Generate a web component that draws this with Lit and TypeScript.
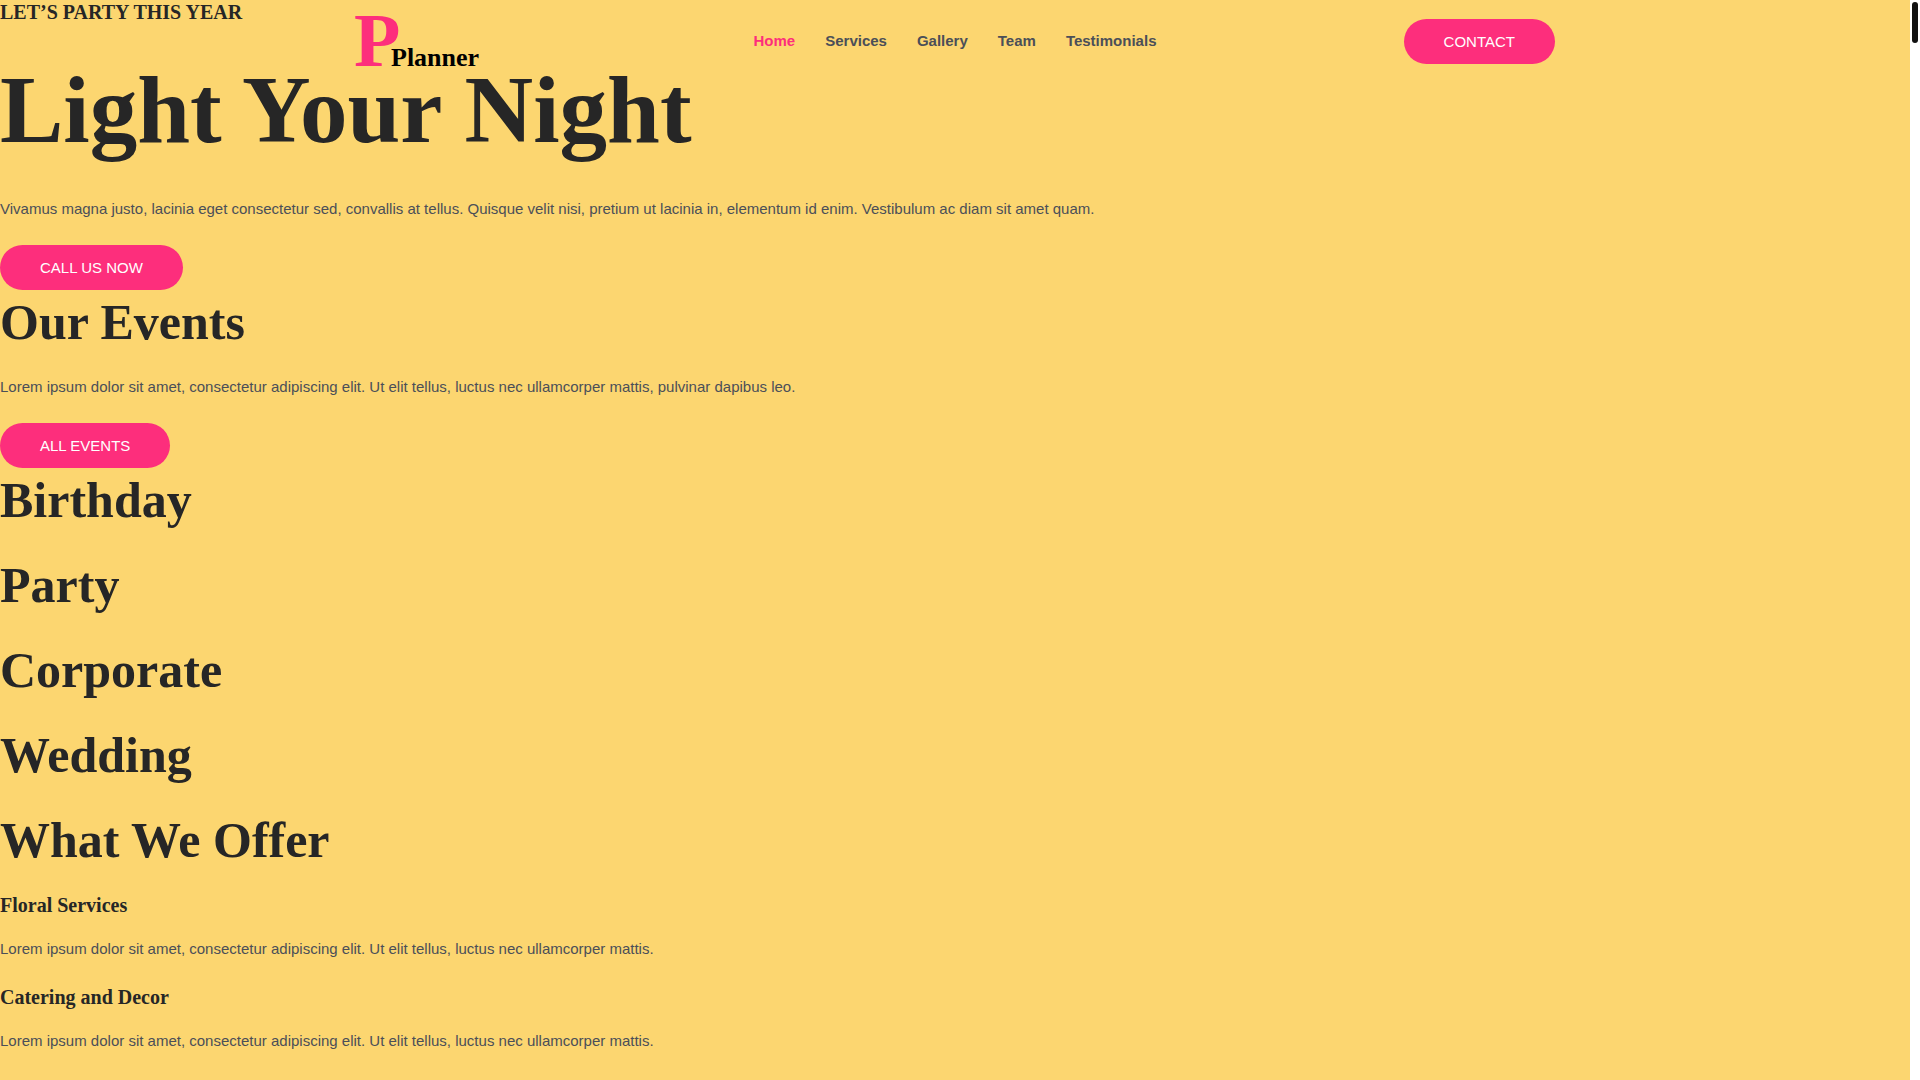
import { LitElement, html, css } from "lit";
import { customElement, state } from "lit/decorators.js";

const LINKS = ["Home", "Services", "Gallery", "Team", "Testimonials"];
const EVENTS = ["Birthday", "Party", "Corporate", "Wedding"];
const OFFERS = ["Floral Services", "Catering and Decor"];

@customElement("app-root")
export class AppRoot extends LitElement {
  static styles = css`
    :host {
      display: flex;
      height: 100vh;
      overflow: hidden;
      background: #fcd670;
      color: #4b4f58;
      font: 15px/24px "Liberation Sans", Arial, sans-serif;
    }
    .page {
      position: relative;
      flex: 1;
      min-width: 0;
      overflow: hidden;
    }
    .header {
      position: absolute;
      top: 0;
      left: 0;
      right: 0;
      z-index: 1;
      padding: 14px 20px;
    }
    .bar {
      display: grid;
      grid-template-columns: 1fr auto 1fr;
      align-items: center;
      max-width: 1200px;
      margin: 0 auto;
    }
    .logo {
      display: block;
      justify-self: start;
      height: 55px;
    }
    .mark {
      display: block;
      overflow: visible;
      font-family: "Liberation Serif", "Times New Roman", serif;
      font-weight: 700;
    }
    .initial {
      fill: #fd2e7c;
      font-size: 76px;
    }
    .name {
      fill: #000;
      font-size: 26px;
    }
    .nav {
      display: flex;
      gap: 30px;
      padding-bottom: 2px;
    }
    .link {
      color: inherit;
      font-weight: 700;
      text-decoration: none;
    }
    .link.current {
      color: #fd2e7c;
    }
    .button {
      display: inline-block;
      padding: 15px 40px;
      border-radius: 30px;
      background: #fd2e7c;
      color: #fff;
      line-height: 15px;
      text-decoration: none;
      text-transform: uppercase;
      vertical-align: top;
    }
    .end {
      justify-self: end;
    }
    .hero,
    .title,
    .label {
      margin: 0 0 20px;
      color: #262626;
      font-family: "Liberation Serif", "Times New Roman", serif;
      font-weight: 700;
    }
    .hero {
      font-size: 95px;
      line-height: 133px;
    }
    .title {
      font-size: 50px;
      line-height: 65px;
    }
    .label {
      font-size: 20px;
      line-height: 24px;
    }
    .text {
      margin: 0 0 24px;
    }
    .track {
      flex: none;
      box-sizing: border-box;
      width: 10px;
      padding: 2px;
      background: #fff;
    }
    .thumb {
      height: 41px;
      border-radius: 3px;
      background: #111;
    }
  `;

  @state() private current = "Home";

  render() {
    return html`
      <div class="page">
        <header class="header">
          <div class="bar">
            <a class="logo" href="#home">
              <svg class="mark" width="126" height="55" viewBox="0 0 126 55">
                <text class="initial" x="-1" y="52">P</text>
                <text class="name" x="36" y="52">Planner</text>
              </svg>
            </a>
            <nav class="nav">
              ${LINKS.map(
                (name) => html`<a
                  class="link ${name === this.current ? "current" : ""}"
                  href="#${name.toLowerCase()}"
                  @click=${() => (this.current = name)}
                  >${name}</a
                >`
              )}
            </nav>
            <a class="button end" href="#contact">Contact</a>
          </div>
        </header>
        <main>
          <section>
            <h4 class="label">LET’S PARTY THIS YEAR</h4>
            <h1 class="hero">Light Your Night</h1>
            <p class="text">
              Vivamus magna justo, lacinia eget consectetur sed, convallis at tellus. Quisque velit
              nisi, pretium ut lacinia in, elementum id enim. Vestibulum ac diam sit amet quam.
            </p>
            <a class="button" href="#call">Call us now</a>
          </section>
          <section>
            <h2 class="title">Our Events</h2>
            <p class="text">
              Lorem ipsum dolor sit amet, consectetur adipiscing elit. Ut elit tellus, luctus nec
              ullamcorper mattis, pulvinar dapibus leo.
            </p>
            <a class="button" href="#events">All events</a>
            ${EVENTS.map((name) => html`<h2 class="title">${name}</h2>`)}
          </section>
          <section>
            <h2 class="title">What We Offer</h2>
            ${OFFERS.map(
              (name) => html`
                <h4 class="label">${name}</h4>
                <p class="text">
                  Lorem ipsum dolor sit amet, consectetur adipiscing elit. Ut elit tellus, luctus
                  nec ullamcorper mattis.
                </p>
              `
            )}
          </section>
        </main>
      </div>
      <div class="track" aria-hidden="true"><div class="thumb"></div></div>
    `;
  }
}
